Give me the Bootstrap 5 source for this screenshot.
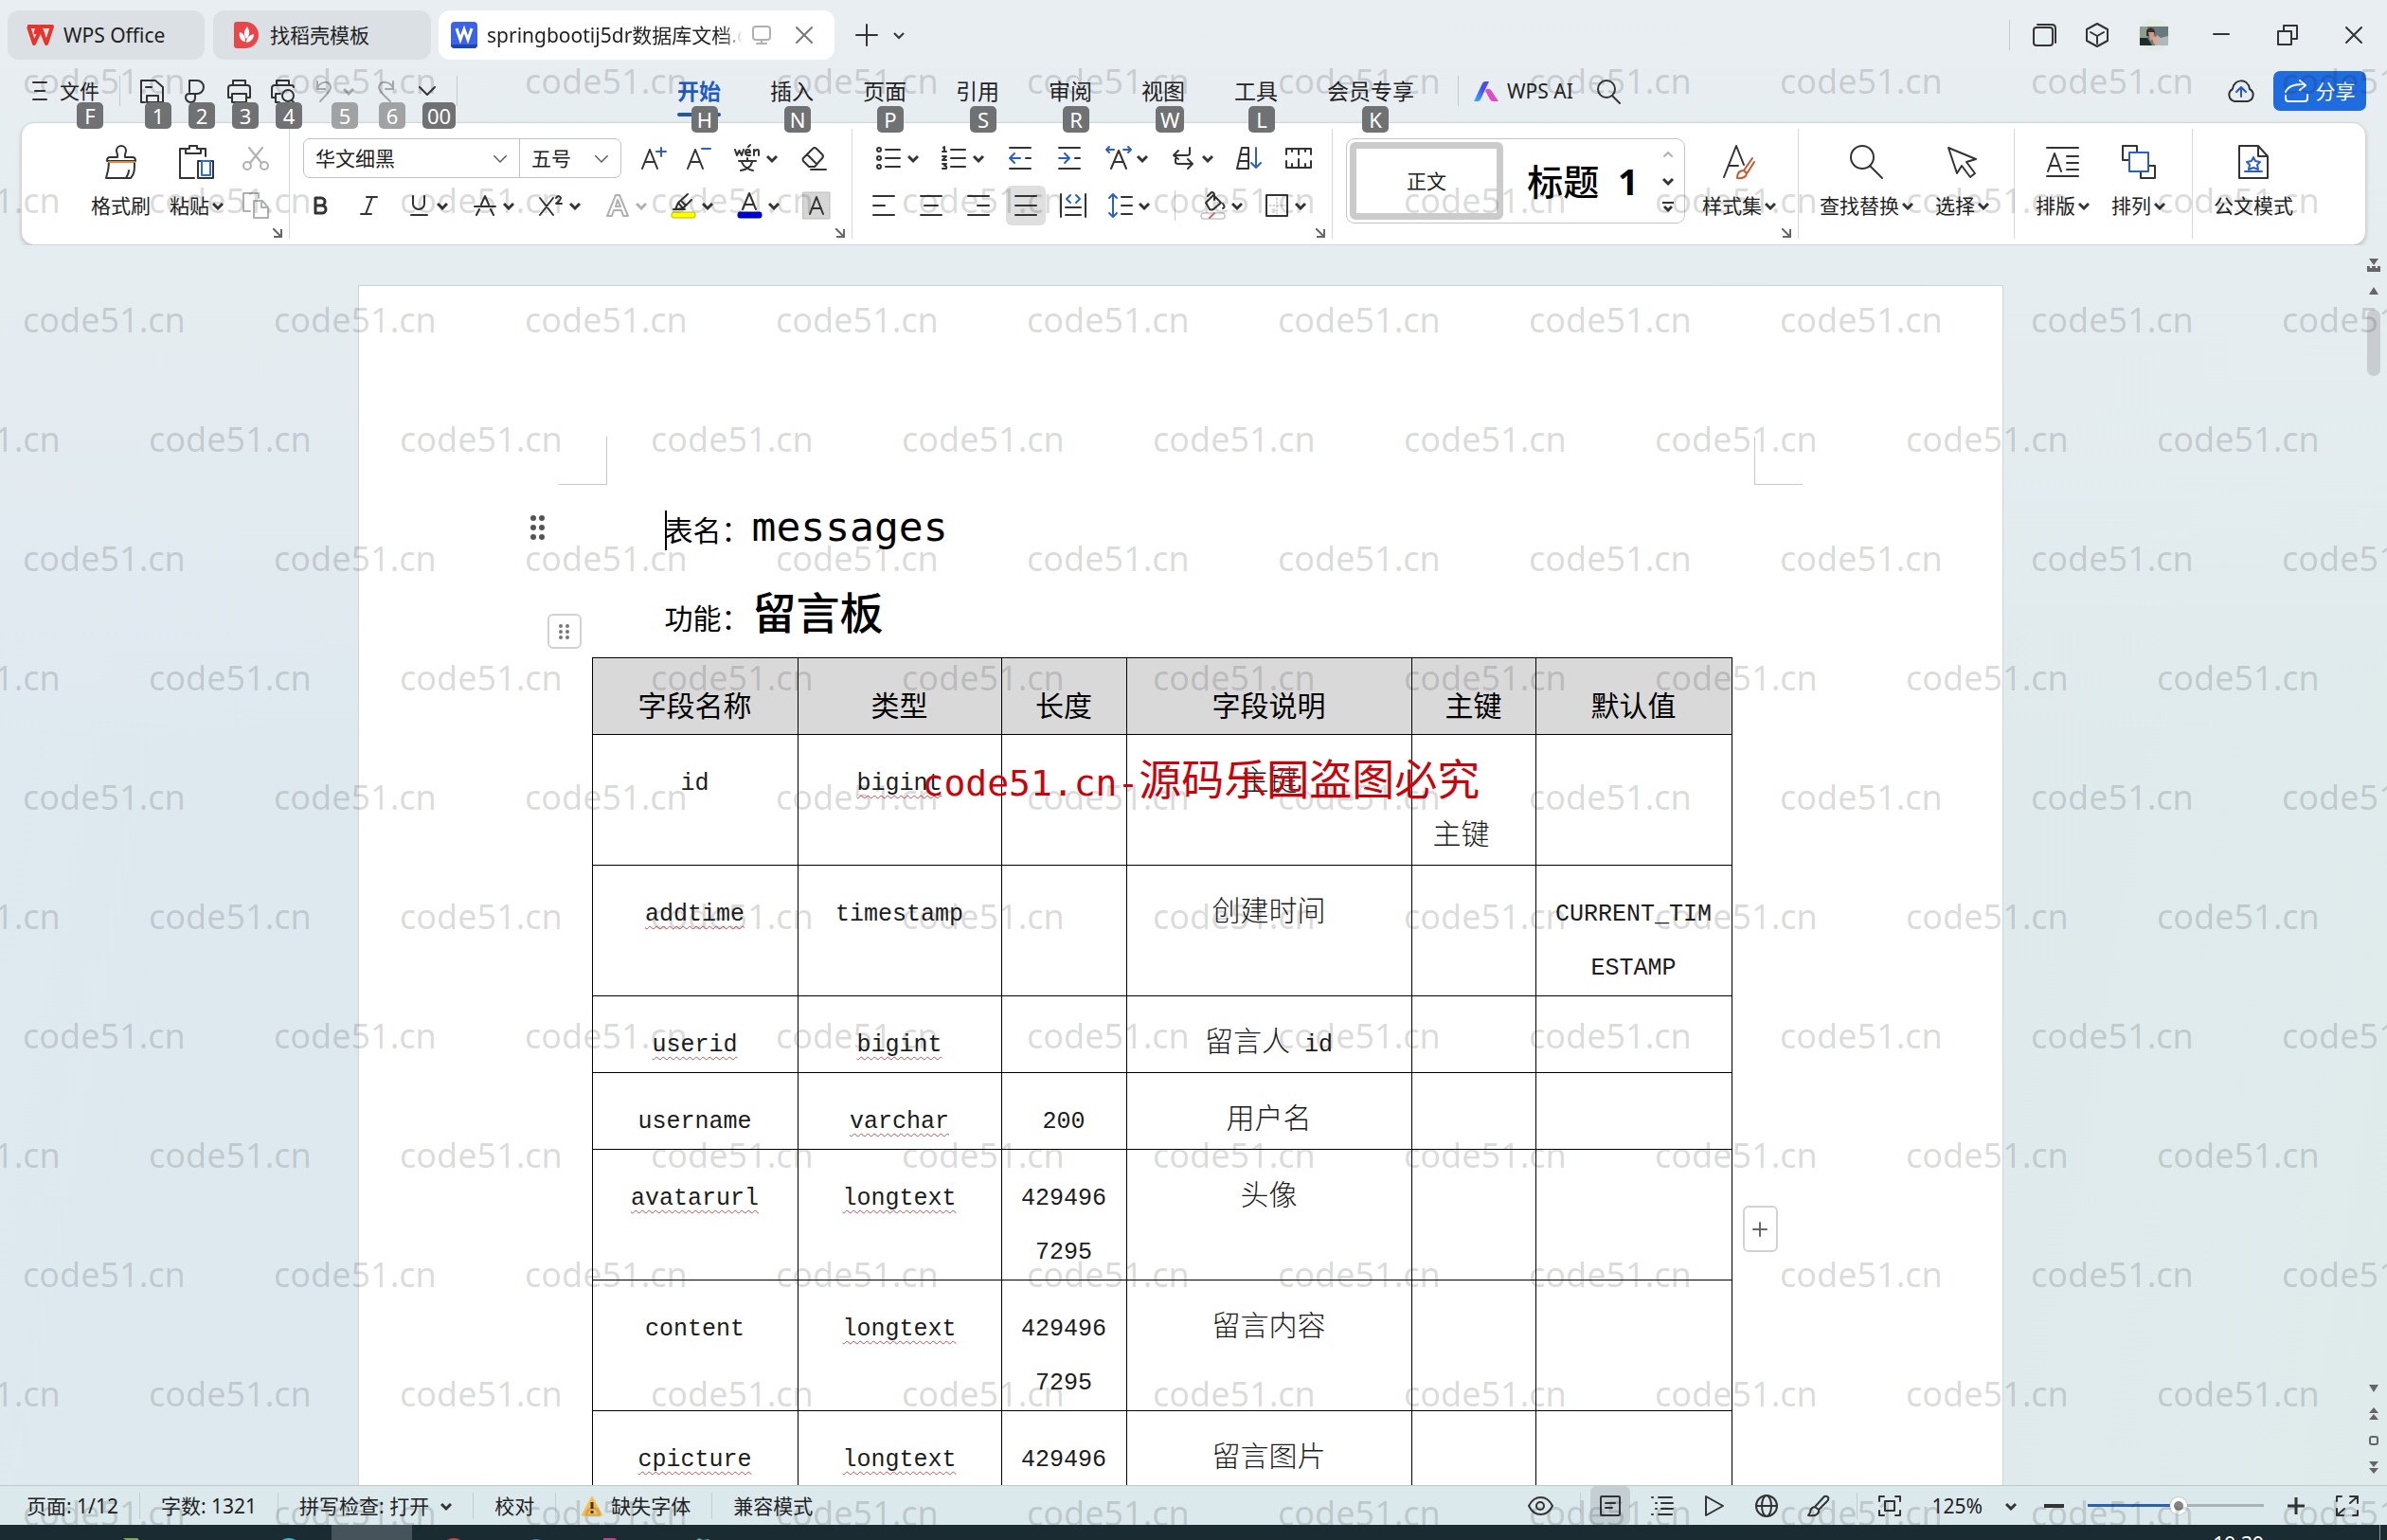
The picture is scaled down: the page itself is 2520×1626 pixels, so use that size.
<!DOCTYPE html>
<html lang="zh-CN">
<head>
<meta charset="utf-8">
<meta name="viewport" content="width=device-width, initial-scale=1">
<title>springbootij5dr数据库文档 - WPS Office</title>
<link rel="stylesheet" href="https://cdn.jsdelivr.net/npm/bootstrap@5.3.0/dist/css/bootstrap.min.css">
<style>
body{font-family:"Noto Sans","Noto Sans CJK SC",sans-serif;font-size:21px;line-height:30px;color:#222;background:linear-gradient(100deg,#dfe9f0 0,#dce9ed 45%,#e0eaee 75%,#dfebeb 100%)}
button{font:inherit;color:inherit;background:none;border:0;padding:0}
svg{display:block;flex:none;overflow:visible}
.ic{fill:none;stroke:#333;stroke-width:2;stroke-linecap:round;stroke-linejoin:round}
.chev{width:12px;height:12px;fill:none;stroke:#333;stroke-width:3}
.thin-chev{stroke-width:2}
.faded{opacity:.38}
.shell-head{background:linear-gradient(#e8eef2,#e6edf1)}
.titlebar{padding:11px 0 0 8px;height:63px}
.doc-tab{height:52px;border-radius:12px;background:#dbe0e4;white-space:nowrap}
.doc-tab.current{background:#fff}
.tab-home{width:208px;padding-left:20px;gap:10px;margin-right:9px}
.tab-tpl{width:230px;padding-left:22px;gap:12px;margin-right:8px}
.tab-doc{width:418px;padding-left:13px;gap:10px;margin-right:22px}
.tab-title{width:270px;overflow:hidden;-webkit-mask-image:linear-gradient(90deg,#000 92%,transparent);mask-image:linear-gradient(90deg,#000 92%,transparent)}
.vrule{width:1px;height:32px;background:#c6cbd0;flex:none}
.win-btn{width:70px;height:50px}
.app-btn{width:56px;height:50px}
.menubar{height:66px;padding-left:35px}
.hit{position:relative;height:42px}
.keytip{position:absolute;top:33px;left:5px;min-width:28px;height:28px;line-height:28px;padding:0 5px;border-radius:5px;background:#707172;color:#fff;font-size:22px;text-align:center;z-index:3}
.keytip.dim{background:#a0a2a4}
.keytip.at-end{left:auto;right:-4px}
.quick{gap:21px}
.file-btn{gap:14px}
.menu-tab{font-size:23px;position:relative;height:42px;color:#222;text-decoration:none;line-height:42px;white-space:nowrap}
.menu-tab .keytip{top:37px;left:15px}
.menu-tab .keytip.mid{left:37px}
.menu-tab.on{color:#1f5cc0;font-weight:700}
.menu-tab.on::after{content:"";position:absolute;left:0;right:0;top:44px;height:4px;border-radius:2px;background:#2457a6}
.menu-tab.on .keytip{font-weight:400}
.menus{gap:52px;margin-left:232px;margin-right:46px}
.share{background:#1f6be0;color:#fff;width:98px;height:42px;border-radius:7px;margin-right:22px}
.ribbon{margin:0 22px;height:130px;background:#fff;border-radius:14px;border:1px solid #d2d6d9;box-shadow:0 2px 4px rgba(0,0,0,.18)}
.rgroup{position:relative;padding:16px 23px 0;gap:23px}
.rgroup+.rgroup::before{content:"";position:absolute;left:0;top:6px;bottom:6px;width:1px;background:#d5d7d9}
.g-clip{padding:16px 21px 0 73px;gap:20px}
.g-font{padding-left:15px}
.g-para{padding:16px 21px 0 20px}
.g-style{padding-left:15px;gap:18px}
.g-find{padding-right:26px}
.g-layout{padding-right:28px}
.big{height:92px;white-space:nowrap}
.big .pic{height:50px}
.big .cap{height:42px;gap:3px}
.launch{position:absolute;right:7px;bottom:7px;width:10px;height:10px;fill:none;stroke:#666;stroke-width:2}
.rrow{height:42px}
.g20{gap:20px}.g22{gap:22px}.g24{gap:24px}.g25{gap:25px}
.in6{padding-left:6px}
.split{gap:5px}
.cell{width:28px;height:42px}
.cell.slim{width:24px}
.cell.on{background:#dfdfdf;border-radius:6px;width:42px;margin:0 -7px}
.fontbox{border:1px solid #bfc3c6;border-radius:7px;height:42px;width:336px}
.pick{position:relative}
.pick.size{width:107px}
.pick select{appearance:none;border:0;background:transparent;height:40px;width:100%;padding:0 12px;font:inherit;color:#222}
.pick .chev{position:absolute;right:12px;top:12px;width:16px;height:16px;stroke:#555;stroke-width:1;pointer-events:none}
.pick+.pick{border-left:1px solid #bfc3c6}
.stylebox{width:358px;height:90px;border:1px solid #c3c6c9;border-radius:9px;padding:3px}
.style-now{width:162px;height:82px;border:7px solid #cbcbcb;border-radius:6px}
.style-h1{font-size:38px;font-weight:500;color:#000;white-space:nowrap}
.workspace{min-height:0;overflow:hidden;background:linear-gradient(#e6edf1,rgba(230,237,241,0) 40%)}
.paper{position:relative;width:1737px;margin-top:42px;background:#fff;border:1px solid #cfd6d9;border-bottom:0;padding:210px 0 0 246px;height:1600px;color:#000}
.crop{position:absolute;width:51px;height:51px;top:159px;border:0 solid #c8c8c8;border-bottom-width:1px}
.crop-l{left:211px;border-right-width:1px}
.crop-r{right:211px;border-left-width:1px}
.doc-line{padding-left:77px;font-size:30px;height:88px;line-height:88px;font-family:"Noto Sans CJK SC",sans-serif;white-space:nowrap;margin:0}
.mono-name{font-family:"DejaVu Sans Mono",monospace;font-size:43px;margin-left:2px}
.cn-name{font-size:46px;font-weight:500;margin-left:3px}
.caret{display:inline-block;width:2px;height:42px;background:#000;margin-right:-2px;vertical-align:-10px}
.dragdots{position:absolute;left:181px;top:242px}
.handle{position:absolute;left:199px;top:346px;width:36px;height:37px;border:2px solid #d2d2d2;border-radius:6px;background:#fff}
.addcol{position:absolute;left:1461px;top:971px;width:37px;height:49px;border:2px solid #d2d2d2;border-radius:6px;background:#fff}
.schema{width:1203px;border-collapse:collapse;table-layout:fixed;margin:6px 0 0;font-family:"Liberation Mono","Noto Sans CJK SC",monospace;font-size:25px;line-height:57px;text-align:center;color:#1c1c1c}
.schema th,.schema td{border:1px solid #000;padding:23px 0 0;vertical-align:top;font-weight:400}
.schema th{background:#d9d9d9;color:#000;font-size:30px;line-height:51px;padding-bottom:6px;font-family:"Noto Sans CJK SC",sans-serif}
.schema i{font-style:normal;font-size:30px;font-family:"Noto Sans CJK SC",sans-serif;font-weight:300;line-height:1}
.schema u{text-decoration:underline wavy #c4504e 1px;text-underline-offset:5px}
.schema .pk{text-align:left;padding-left:22px}
.c1{width:217px}.c2{width:215px}.c3{width:132px}.c4{width:301px}.c5{width:131px}.c6{width:207px}
.stamp{position:absolute;left:595px;top:489px;font-size:45px;line-height:60px;color:#c9040c;font-family:"Noto Sans CJK SC",sans-serif;white-space:nowrap}
.stamp span{font-family:"DejaVu Sans Mono",monospace;font-size:38px}
.rail{width:28px;padding:14px 0 12px}
.rail svg{fill:#666}
.thumb{width:14px;height:70px;border-radius:7px;background:#c9cdd0}
.statusbar{height:42px;border-top:1px solid #bcc8cc;background:#dbe8ec;padding-left:28px;white-space:nowrap}
.statusbar .vrule{background:#c3ced2;height:28px}
.view-tools{gap:25px;margin-right:30px}
.view-on{background:#c3cfd2;border-radius:6px;width:42px;height:41px;margin:0 -6px}
.vbtn{width:30px;height:41px}
.zoomer{appearance:none;width:186px;height:24px;margin:0;background:linear-gradient(#2b62ad,#2b62ad) 0 50%/52% 3px no-repeat,linear-gradient(#aab3b6,#aab3b6) 0 50%/100% 3px no-repeat}
.zoomer::-webkit-slider-thumb{appearance:none;width:18px;height:18px;border-radius:50%;background:#858585;border:4px solid #fff;box-shadow:0 0 2px #999}
.taskbar{height:16px;background:#1b2b32;overflow:hidden;color:#fff}
.task-on{background:#46535a;width:85px;height:16px}
.clock{padding:5px 122px 0 0}
.desk-edge{width:1px;background:#8b979c;margin-right:7px}
.wm{position:absolute;inset:0 0 16px 0;overflow:hidden;pointer-events:none;z-index:9;padding-top:23px;color:rgba(30,30,30,.17);font:36px/126px "Noto Sans",sans-serif}
.wm div{height:126px;white-space:nowrap;padding-left:24px}
.wm div:nth-child(even){padding-left:0;margin-left:-108px}
.wm span{display:inline-block;width:265px}
</style>
<script src="https://cdn.jsdelivr.net/npm/bootstrap@5.3.0/dist/js/bootstrap.bundle.min.js"></script>
</head>
<body class="d-flex flex-column vh-100 overflow-hidden position-relative">
<svg width="0" height="0" class="position-absolute">
<symbol id="cv" viewBox="0 0 12 12"><path d="M1 4l5 5 5-5"/></symbol>
<symbol id="ln" viewBox="0 0 10 10"><path d="M0 0l9 9M9 1v8H1"/></symbol>
</svg>

<header class="shell-head">
<div class="titlebar d-flex">
  <button class="doc-tab tab-home d-flex align-items-center"><svg width="29" height="22" viewBox="0 0 29 22" fill="none" stroke="#e5352d" stroke-width="4"><path d="M1 2h11l-3 8M2 2l6 18L15 5l6 15 6-18H14l4 9" stroke-linejoin="round"/></svg>WPS Office</button>
  <button class="doc-tab tab-tpl d-flex align-items-center"><svg width="26" height="28" viewBox="0 0 26 28"><path d="M3 0h9a14 14 0 010 28H3a3 3 0 01-3-3V3a3 3 0 013-3z" fill="#e8474a"/><path d="M14 5c3 5 3 9-1 13-3-4-3-8 1-13zM6 11c4 1 6 4 6 10-5-1-7-5-6-10zM21 13c0 5-3 8-8 9 0-5 3-8 8-9z" fill="#fff"/></svg>找稻壳模板</button>
  <div class="doc-tab current tab-doc d-flex align-items-center"><svg width="28" height="28" viewBox="0 0 28 28"><rect width="28" height="28" rx="4" fill="#3a63e8"/><path d="M0 24h28v0a4 4 0 01-4 4H4a4 4 0 01-4-4z" fill="#1f44b8"/><path d="M6 7l4 12 4-11 4 11 4-12" fill="none" stroke="#fff" stroke-width="3"/></svg><span class="tab-title">springbootij5dr数据库文档.doc</span>
    <svg class="ic faded" width="20" height="20" viewBox="0 0 20 20"><rect x="1" y="1" width="18" height="14" rx="3"/><path d="M10 15v4M5 19h10"/></svg>
    <button class="ms-3" aria-label="关闭标签"><svg class="ic" width="18" height="18" viewBox="0 0 18 18"><path d="M1 1l16 16M17 1L1 17" stroke="#777"/></svg></button></div>
  <button aria-label="新建"><svg class="ic" width="24" height="24" viewBox="0 0 24 24"><path d="M12 1v22M1 12h22"/></svg></button>
  <button class="ms-3" aria-label="更多"><svg class="chev thin-chev"><use href="#cv"/></svg></button>
  <div class="d-flex align-items-center ms-auto">
    <span class="vrule me-2"></span>
    <button class="app-btn d-flex align-items-center justify-content-center" aria-label="窗口"><svg class="ic" width="25" height="24" viewBox="0 0 25 24"><rect x="1" y="4" width="20" height="19" rx="3"/><path d="M5 1h15q4 0 4 4v15"/></svg></button>
    <button class="app-btn d-flex align-items-center justify-content-center" aria-label="应用"><svg class="ic" width="24" height="26" viewBox="0 0 24 26"><path d="M12 1l11 6v12l-11 6-11-6V7zM5 10l7 4 7-4M12 14v8"/></svg></button>
    <button class="app-btn d-flex align-items-center justify-content-center ms-1" aria-label="账号"><svg width="34" height="34" viewBox="0 0 34 34"><circle cx="17" cy="17" r="17" fill="#e4ebe3"/><rect x="2" y="8" width="30" height="20" fill="#68787b"/><path d="M2 8h8v12H2z" fill="#8d9e95"/><path d="M9 12q5-6 9 1v5h-9z" fill="#3b2c2b"/><path d="M11 14h6l1 6-5 3z" fill="#c99c86"/><path d="M2 28v-8l8 0 5 8z" fill="#1e2d2b"/><path d="M20 17l4 3 8-2v10H18z" fill="#aeb8be"/><path d="M15 20l6-2 1 7-5 2z" fill="#d6a793"/></svg></button>
    <button class="win-btn d-flex align-items-center justify-content-center ms-2" aria-label="最小化"><svg class="ic" width="18" height="18" viewBox="0 0 18 18"><path d="M1 8h16"/></svg></button>
    <button class="win-btn d-flex align-items-center justify-content-center" aria-label="还原"><svg class="ic" width="22" height="22" viewBox="0 0 22 22"><rect x="1" y="7" width="14" height="14"/><path d="M7 7V1h14v14h-6"/></svg></button>
    <button class="win-btn d-flex align-items-center justify-content-center" aria-label="关闭"><svg class="ic" width="18" height="18" viewBox="0 0 18 18"><path d="M1 1l16 16M17 1L1 17"/></svg></button>
  </div>
</div>

<div class="menubar d-flex align-items-center">
  <div class="quick d-flex align-items-center">
    <button class="hit file-btn d-flex align-items-center text-nowrap"><svg class="ic" width="14" height="20" viewBox="0 0 14 20"><path d="M0 1h14M2 10h10M0 19h14"/></svg>文件<span class="keytip at-end">F</span></button>
    <span class="vrule"></span>
    <button class="hit d-flex align-items-center" aria-label="保存"><svg class="ic" width="25" height="25" viewBox="0 0 25 25"><path d="M5 24H1V1h15l8 7v16h-4M7 24v-7h12v7zM6 8h6"/></svg><span class="keytip">1</span></button>
    <button class="hit d-flex align-items-center" aria-label="输出为PDF"><svg class="ic" width="25" height="25" viewBox="0 0 25 25"><path d="M6 13V1h8a7 7 0 010 14H6c-3 0-4 2-4 4s2 5 5 5 5-2 5-5v-4"/></svg><span class="keytip">2</span></button>
    <button class="hit d-flex align-items-center" aria-label="打印"><svg class="ic" width="25" height="25" viewBox="0 0 25 25"><path d="M6 6V1h13v5M5 19H1V9q0-3 3-3h17q3 0 3 3v10h-4M5 15h15v9H5z"/></svg><span class="keytip">3</span></button>
    <button class="hit d-flex align-items-center" aria-label="打印预览"><svg class="ic" width="25" height="25" viewBox="0 0 25 25"><path d="M6 6V1h13v5M5 19H1V9q0-3 3-3h17q3 0 3 2M10 15H5v9h4"/><circle cx="18" cy="17" r="6"/><path d="M22 22l4 4"/></svg><span class="keytip">4</span></button>
    <button class="hit d-flex align-items-center" aria-label="撤销"><svg class="ic faded me-2" width="22" height="24" viewBox="0 0 22 24"><path d="M3 2v8h8M3 9C6 2 16 0 17 8c0 5-6 9-11 15"/></svg><svg class="chev faded"><use href="#cv"/></svg><span class="keytip dim at-end">5</span></button>
    <button class="hit d-flex align-items-center" aria-label="恢复"><svg class="ic faded" width="25" height="24" viewBox="0 0 25 24"><path d="M20 2v8h-8M20 9C17 2 7 0 5 8c0 5 7 10 12 15"/></svg><span class="keytip dim">6</span></button>
    <button class="hit d-flex align-items-center" aria-label="更多命令"><svg class="ic" width="20" height="12" viewBox="0 0 20 12"><path d="M2 2l8 8 8-8"/></svg><span class="keytip">00</span></button>
    <span class="vrule"></span>
  </div>
  <nav class="menus d-flex align-items-center">
    <a class="menu-tab on" href="#">开始<span class="keytip">H</span></a>
    <a class="menu-tab" href="#">插入<span class="keytip">N</span></a>
    <a class="menu-tab" href="#">页面<span class="keytip">P</span></a>
    <a class="menu-tab" href="#">引用<span class="keytip">S</span></a>
    <a class="menu-tab" href="#">审阅<span class="keytip">R</span></a>
    <a class="menu-tab" href="#">视图<span class="keytip">W</span></a>
    <a class="menu-tab" href="#">工具<span class="keytip">L</span></a>
    <a class="menu-tab" href="#">会员专享<span class="keytip mid">K</span></a>
  </nav>
  <span class="vrule me-3"></span>
  <button class="d-flex align-items-center text-nowrap"><svg class="me-2" width="27" height="21" viewBox="0 0 27 21"><defs><linearGradient id="ai" x1="0" y1="1" x2="1" y2="0"><stop offset="0" stop-color="#35b7ff"/><stop offset=".6" stop-color="#4b4bf0"/></linearGradient></defs><path d="M0 21L9 2q1-2 3-2h4L7 19q-1 2-3 2z" fill="url(#ai)"/><path d="M13 8q3-1 5 1l8 12h-6q-2 0-3-2l-5-9z" fill="#e04cc8"/></svg>WPS AI</button>
  <button class="ms-4" aria-label="搜索"><svg class="ic" width="27" height="27" viewBox="0 0 27 27"><circle cx="11" cy="11" r="9"/><path d="M17 18l8 8"/></svg></button>
  <button class="ms-auto me-3 pe-1" aria-label="云同步"><svg class="ic" width="29" height="25" viewBox="0 0 29 25"><path d="M8 23a7 7 0 01-2-13c1-11 16-12 18 0a7 7 0 01-2 13z"/><path d="M15 18V9M10 13l5-5 5 5" stroke="#2a56c6"/></svg></button>
  <button class="share d-flex align-items-center justify-content-center gap-2"><svg class="ic" width="25" height="24" viewBox="0 0 25 24"><path d="M1 13c2-5 8-8 18-8M16 1l6 5-6 5M1 17v3q0 3 3 3h17q3 0 3-3v-4" stroke="#fff"/></svg>分享</button>
</div>

<div class="ribbon d-flex">
  <div class="rgroup g-clip d-flex">
    <button class="big d-flex flex-column align-items-center"><span class="pic d-flex align-items-center"><svg class="ic" width="34" height="36" viewBox="0 0 34 36"><path d="M13 13c1-3-1-4-1-7a5 5 0 0110 0c0 3-2 4-1 7h8q3 0 3 4H2q0-4 3-4zM4 18c0 8-1 11-3 17h26c4-4 4-9 4-17M22 35c2-3 3-5 3-8"/><path d="M4 18h27" stroke="#d98a3a"/></svg></span><span class="cap d-flex align-items-center">格式刷</span></button>
    <button class="big d-flex flex-column align-items-center"><span class="pic d-flex align-items-center"><svg class="ic" width="37" height="36" viewBox="0 0 37 36"><path d="M6 4H1v31h15M23 4h5v8M7 4h4V1h8v3h4v5H7z"/><path d="M20 17v18h16V17z"/><path d="M24 17h9v15h-9z" stroke="#2c6fd0"/></svg></span><span class="cap d-flex align-items-center">粘贴<svg class="chev"><use href="#cv"/></svg></span></button>
    <div class="d-flex flex-column gap-2">
      <button class="cell rrow d-flex align-items-center justify-content-center" aria-label="剪切"><svg class="ic faded" width="28" height="25" viewBox="0 0 28 25"><circle cx="5" cy="20" r="4"/><circle cx="23" cy="20" r="4"/><path d="M7 1l13 16M21 1L8 17"/></svg></button>
      <button class="cell rrow d-flex align-items-center justify-content-center" aria-label="复制"><svg class="ic faded" width="28" height="28" viewBox="0 0 28 28"><path d="M8 20H1V1h16v5M12 9h9l6 7v11H12zM20 9v7h7"/></svg></button>
    </div>
    <svg class="launch"><use href="#ln"/></svg>
  </div>

  <div class="rgroup g-font d-flex flex-column gap-2">
    <div class="rrow g20 d-flex align-items-center">
      <div class="fontbox d-flex">
        <label class="pick flex-grow-1"><select aria-label="字体"><option>华文细黑</option></select><svg class="chev"><use href="#cv"/></svg></label>
        <label class="pick size"><select aria-label="字号"><option>五号</option></select><svg class="chev"><use href="#cv"/></svg></label>
      </div>
      <button class="cell d-flex align-items-center justify-content-center" aria-label="增大字号"><svg class="ic" width="26" height="24" viewBox="0 0 26 24"><path d="M1 23L9 3l8 20M4 16h10"/><path d="M21 1v9M16 5h10" stroke="#2c5fc4"/></svg></button>
      <button class="cell d-flex align-items-center justify-content-center" aria-label="减小字号"><svg class="ic" width="26" height="24" viewBox="0 0 26 24"><path d="M1 23L9 3l8 20M4 16h10"/><path d="M16 2h9" stroke="#2c5fc4"/></svg></button>
      <button class="split d-flex align-items-center px-1" aria-label="拼音指南"><svg class="ic" width="28" height="28" viewBox="0 0 28 28"><path d="M0 5l2 6 2.500-5L7 11l2-6M11 8h5q0-3-2.500-3T11 8t3 3h2M14 2l2-2M20 11V5M20 7q5-4 5 0v4M4 17h18M13 14v3M7 18c2 5 7 8 12 9M18 18c-1 5-6 8-12 9"/></svg><svg class="chev"><use href="#cv"/></svg></button>
      <button class="cell d-flex align-items-center justify-content-center" aria-label="清除格式"><svg class="ic" width="27" height="26" viewBox="0 0 27 26"><path d="M12 3q2-2 4 0l6 6q2 2 0 4l-8 9H8l-6-6q-1-2 0-3zM6 9l10 10M10 25h16"/></svg></button>
    </div>
    <div class="rrow g25 in6 d-flex align-items-center">
      <button class="cell slim d-flex align-items-center justify-content-center" aria-label="加粗"><svg class="ic" width="15" height="20" viewBox="0 0 15 20"><path d="M2 2h6a4 4 0 010 8H2zM2 10h7a4 4 0 010 8H2z" stroke-width="3"/></svg></button>
      <button class="cell d-flex align-items-center justify-content-center" aria-label="倾斜"><svg class="ic" width="19" height="20" viewBox="0 0 19 20"><path d="M7 1h11M1 19h11M13 1L6 19"/></svg></button>
      <button class="split d-flex align-items-center" aria-label="下划线"><svg class="ic" width="28" height="20" viewBox="0 0 28 20"><path d="M8 0v8a6 6 0 0012 0V0M6 20h17"/></svg><svg class="chev"><use href="#cv"/></svg></button>
      <button class="split d-flex align-items-center" aria-label="删除线"><svg class="ic" width="28" height="22" viewBox="0 0 28 22"><path d="M10 10l4-9 4 9M8 15l-3 6M20 15l3 6M3 12h22"/></svg><svg class="chev"><use href="#cv"/></svg></button>
      <button class="split d-flex align-items-center" aria-label="上标"><svg class="ic" width="28" height="22" viewBox="0 0 28 22"><path d="M2 3l14 18M16 3L2 21M19 3q3-4 5 0 0 2-5 6h6"/></svg><svg class="chev"><use href="#cv"/></svg></button>
      <button class="split d-flex align-items-center faded" aria-label="文字效果"><svg class="ic" width="28" height="24" viewBox="0 0 28 24"><path d="M3 23L12 1h4l9 22h-5l-2-6h-8l-2 6zM12 13h5l-3-7z"/></svg><svg class="chev"><use href="#cv"/></svg></button>
      <button class="split d-flex align-items-center" aria-label="突出显示"><svg class="ic" width="28" height="28" viewBox="0 0 28 28"><path d="M5 18l3-7 5 6zM8 11l10-9M13 17l9-9M12 10l4 4M3 18h12"/><rect x="1" y="21" width="25" height="6" rx="2" fill="#ffff00" stroke="#b9b900" stroke-width="1"/></svg><svg class="chev"><use href="#cv"/></svg></button>
      <button class="split d-flex align-items-center" aria-label="字体颜色"><svg class="ic" width="28" height="28" viewBox="0 0 28 28"><path d="M6 18L13 1l7 17M8 13h10"/><rect x="1" y="21" width="25" height="6" rx="2" fill="#0000d0" stroke="#0000a0" stroke-width="1"/></svg><svg class="chev"><use href="#cv"/></svg></button>
      <button class="cell d-flex align-items-center justify-content-center" aria-label="字符底纹"><svg class="ic" width="28" height="28" viewBox="0 0 28 28"><rect x="0" y="0" width="28" height="28" fill="#d6d6d6" stroke="#bdbdbd" stroke-width="1"/><path d="M7 23L14 5l7 18M9 17h10"/></svg></button>
    </div>
    <svg class="launch"><use href="#ln"/></svg>
  </div>

  <div class="rgroup g-para d-flex flex-column gap-2">
    <div class="rrow g24 in6 d-flex align-items-center">
      <button class="split d-flex align-items-center" aria-label="项目符号"><svg class="ic" width="28" height="24" viewBox="0 0 28 24"><circle cx="3" cy="3" r="2"/><circle cx="3" cy="12" r="2"/><circle cx="3" cy="21" r="2"/><path d="M10 3h15M10 12h15M10 21h15"/></svg><svg class="chev"><use href="#cv"/></svg></button>
      <button class="split d-flex align-items-center" aria-label="编号"><svg class="ic" width="28" height="24" viewBox="0 0 28 24"><path d="M2 1l1-1v5M1 5h4M1 10h4L1 14h4M1 18h4l-2 2q3 0 2 3H1M10 3h15M10 12h15M10 21h15"/></svg><svg class="chev"><use href="#cv"/></svg></button>
      <button class="cell d-flex align-items-center justify-content-center" aria-label="减少缩进"><svg class="ic" width="24" height="24" viewBox="0 0 24 24"><path d="M1 1h22M18 12h5M1 23h22"/><path d="M12 12H1M6 7l-5 5 5 5" stroke="#2c5fc4"/></svg></button>
      <button class="cell d-flex align-items-center justify-content-center" aria-label="增加缩进"><svg class="ic" width="24" height="24" viewBox="0 0 24 24"><path d="M1 1h22M18 12h5M1 23h22"/><path d="M1 12h11M7 7l5 5-5 5" stroke="#2c5fc4"/></svg></button>
      <button class="split d-flex align-items-center" aria-label="中文版式"><svg class="ic" width="28" height="24" viewBox="0 0 28 24"><path d="M6 23l8-19 8 19M9 16h10"/><path d="M9 3H1M4 0L1 3l3 3M19 3h8M24 0l3 3-3 3" stroke="#2c5fc4"/></svg><svg class="chev"><use href="#cv"/></svg></button>
      <button class="split d-flex align-items-center" aria-label="换行"><svg class="ic" width="28" height="24" viewBox="0 0 28 24"><path d="M20 1v6q0 2-3 2H4M8 4L3 9l5 4M5 13v3q0 2 3 2h14M18 13l5 5-5 5"/></svg><svg class="chev"><use href="#cv"/></svg></button>
      <button class="cell d-flex align-items-center justify-content-center" aria-label="排序"><svg class="ic" width="28" height="24" viewBox="0 0 28 24"><path d="M1 23L6 1h7v22zM5 8h8M3 15h10"/><path d="M21 1v21M16 17l5 5 5-5" stroke="#2c5fc4"/></svg></button>
      <button class="cell d-flex align-items-center justify-content-center" aria-label="制表位"><svg class="ic" width="28" height="24" viewBox="0 0 28 24"><path d="M1 8V2h26v6M7 2v3M14 2v6M21 2v3M1 15v7h26v-7M7 22v-4M14 22v-9M21 22v-4"/></svg></button>
    </div>
    <div class="rrow g22 d-flex align-items-center">
      <button class="cell d-flex align-items-center justify-content-center" aria-label="左对齐"><svg class="ic" width="24" height="22" viewBox="0 0 24 22"><path d="M1 1h22M1 11h12M1 21h22"/></svg></button>
      <button class="cell d-flex align-items-center justify-content-center" aria-label="居中"><svg class="ic" width="24" height="22" viewBox="0 0 24 22"><path d="M1 1h22M5 11h14M1 21h22"/></svg></button>
      <button class="cell d-flex align-items-center justify-content-center" aria-label="右对齐"><svg class="ic" width="24" height="22" viewBox="0 0 24 22"><path d="M1 1h22M11 11h12M1 21h22"/></svg></button>
      <button class="cell on d-flex align-items-center justify-content-center" aria-label="两端对齐"><svg class="ic" width="24" height="22" viewBox="0 0 24 22"><path d="M1 1h22M1 11h22M1 21h22"/></svg></button>
      <button class="cell d-flex align-items-center justify-content-center" aria-label="分散对齐"><svg class="ic" width="28" height="24" viewBox="0 0 28 24"><path d="M1 0v24M27 0v24M6 14h16M6 22h16"/><path d="M11 1L7 5l4 4M17 1l4 4-4 4" stroke="#2c5fc4"/></svg></button>
      <button class="split d-flex align-items-center" aria-label="行距"><svg class="ic" width="28" height="24" viewBox="0 0 28 24"><path d="M15 3h11M15 12h11M15 21h11"/><path d="M6 0v24M2 4l4-4 4 4M2 20l4 4 4-4" stroke="#2c5fc4"/></svg><svg class="chev"><use href="#cv"/></svg></button>
      <span class="vrule mx-1"></span>
      <button class="split d-flex align-items-center" aria-label="底纹"><svg class="ic" width="28" height="28" viewBox="0 0 28 28"><path d="M8 4l4-4q3 0 3 3v5M6 11l8-8 8 8-8 7q-2 1-4 0zM24 12q3 4 0 5"/><rect x="1" y="22" width="25" height="6" rx="2" stroke="#aaa" stroke-width="1"/><path d="M10 27l5-5" stroke="#d66"/></svg><svg class="chev"><use href="#cv"/></svg></button>
      <button class="split d-flex align-items-center" aria-label="边框"><svg class="ic" width="28" height="24" viewBox="0 0 28 24"><rect x="3" y="1" width="22" height="22"/><path d="M14 4v17M6 12h17" stroke="#aaa" stroke-width="1" stroke-dasharray="2 2"/></svg><svg class="chev"><use href="#cv"/></svg></button>
    </div>
    <svg class="launch"><use href="#ln"/></svg>
  </div>

  <div class="rgroup g-style d-flex">
    <div class="stylebox d-flex align-items-center">
      <button class="style-now">正文</button>
      <button class="style-h1 flex-grow-1">标题&nbsp; <b>1</b></button>
      <div class="d-flex flex-column gap-3 me-2"><svg class="ic faded" width="12" height="12" viewBox="0 0 12 12"><path d="M2 8l4-4 4 4"/></svg><svg class="chev"><use href="#cv"/></svg><svg class="chev" viewBox="0 0 12 12"><path d="M0 1h12" stroke-width="2"/><path d="M2 5l4 4 4-4"/></svg></div>
    </div>
    <button class="big d-flex flex-column align-items-center"><span class="pic d-flex align-items-center"><svg class="ic" width="34" height="36" viewBox="0 0 34 36"><path d="M1 34L14 1l8 20M6 22h10"/><path d="M31 14l-9 13M33 18l-7 11M22 27q-7 0-7 8 9 1 10-5z" stroke="#c8562a"/></svg></span><span class="cap d-flex align-items-center">样式集<svg class="chev"><use href="#cv"/></svg></span></button>
    <svg class="launch"><use href="#ln"/></svg>
  </div>

  <div class="rgroup g-find d-flex">
    <button class="big d-flex flex-column align-items-center"><span class="pic d-flex align-items-center"><svg class="ic" width="35" height="36" viewBox="0 0 35 36"><circle cx="13" cy="13" r="12"/><path d="M21 22l13 13"/></svg></span><span class="cap d-flex align-items-center">查找替换<svg class="chev"><use href="#cv"/></svg></span></button>
    <button class="big d-flex flex-column align-items-center"><span class="pic d-flex align-items-center"><svg class="ic" width="32" height="33" viewBox="0 0 32 33"><path d="M1 1l9 27 5-8 9 12 5-4-9-12 10-3z"/></svg></span><span class="cap d-flex align-items-center">选择<svg class="chev"><use href="#cv"/></svg></span></button>
  </div>
  <div class="rgroup g-layout d-flex">
    <button class="big d-flex flex-column align-items-center"><span class="pic d-flex align-items-center"><svg class="ic" width="35" height="32" viewBox="0 0 35 32"><path d="M1 1h33M1 31h33M2 26L9 7l7 19M4 20h10M22 10h12M22 17h12M22 24h12"/></svg></span><span class="cap d-flex align-items-center">排版<svg class="chev"><use href="#cv"/></svg></span></button>
    <button class="big d-flex flex-column align-items-center"><span class="pic d-flex align-items-center"><svg class="ic" width="36" height="36" viewBox="0 0 36 36"><path d="M8 16H1V1h15v6M29 22h6v13H20v-6"/><rect x="8" y="8" width="20" height="20" stroke="#2c5fc4"/></svg></span><span class="cap d-flex align-items-center">排列<svg class="chev"><use href="#cv"/></svg></span></button>
  </div>
  <div class="rgroup d-flex">
    <button class="big d-flex flex-column align-items-center"><span class="pic d-flex align-items-center"><svg class="ic" width="32" height="36" viewBox="0 0 32 36"><path d="M1 1h20l10 11v23H1zM21 1v11h10"/><path d="M16 13l2 4 5 1-3 3 1 5-5-2-5 2 1-5-3-3 5-1zM7 28h18" stroke="#2c5fc4"/></svg></span><span class="cap d-flex align-items-center">公文模式</span></button>
  </div>
</div>
</header>

<main class="workspace d-flex flex-grow-1">
  <div class="flex-grow-1 d-flex justify-content-center">
    <article class="paper">
      <span class="crop crop-l"></span><span class="crop crop-r"></span>
      <svg class="dragdots" width="16" height="26" viewBox="0 0 16 26" fill="#555"><circle cx="3" cy="3" r="3"/><circle cx="12" cy="3" r="3"/><circle cx="3" cy="13" r="3"/><circle cx="12" cy="13" r="3"/><circle cx="3" cy="23" r="3"/><circle cx="12" cy="23" r="3"/></svg>
      <button class="handle d-flex align-items-center justify-content-center" aria-label="表格手柄"><svg width="11" height="16" viewBox="0 0 11 16" fill="#777"><circle cx="2" cy="2" r="2"/><circle cx="9" cy="2" r="2"/><circle cx="2" cy="8" r="2"/><circle cx="9" cy="8" r="2"/><circle cx="2" cy="14" r="2"/><circle cx="9" cy="14" r="2"/></svg></button>
      <p class="doc-line"><span class="caret"></span>表名：<span class="mono-name">messages</span></p>
      <p class="doc-line">功能：<span class="cn-name">留言板</span></p>
      <table class="schema">
        <colgroup><col class="c1"><col class="c2"><col class="c3"><col class="c4"><col class="c5"><col class="c6"></colgroup>
        <thead><tr><th>字段名称</th><th>类型</th><th>长度</th><th>字段说明</th><th>主键</th><th>默认值</th></tr></thead>
        <tbody>
        <tr><td>id</td><td><u>bigint</u></td><td></td><td><i>主键</i></td><td class="pk"><br><i>主键</i></td><td></td></tr>
        <tr><td><u>addtime</u></td><td>timestamp</td><td></td><td><i>创建时间</i></td><td></td><td>CURRENT_TIM<br>ESTAMP</td></tr>
        <tr><td><u>userid</u></td><td><u>bigint</u></td><td></td><td><i>留言人</i> id</td><td></td><td></td></tr>
        <tr><td>username</td><td><u>varchar</u></td><td>200</td><td><i>用户名</i></td><td></td><td></td></tr>
        <tr><td><u>avatarurl</u></td><td><u>longtext</u></td><td>429496<br>7295</td><td><i>头像</i></td><td></td><td></td></tr>
        <tr><td>content</td><td><u>longtext</u></td><td>429496<br>7295</td><td><i>留言内容</i></td><td></td><td></td></tr>
        <tr><td><u>cpicture</u></td><td><u>longtext</u></td><td>429496<br>7295</td><td><i>留言图片</i></td><td></td><td></td></tr>
        </tbody>
      </table>
      <button class="addcol d-flex align-items-center justify-content-center" aria-label="添加列"><svg class="ic" width="16" height="16" viewBox="0 0 16 16"><path d="M8 1v14M1 8h14" stroke="#666"/></svg></button>
      <div class="stamp"><span>code51.cn-</span>源码乐园盗图必究</div>
    </article>
  </div>
  <div class="rail d-flex flex-column align-items-center">
    <svg width="14" height="14" viewBox="0 0 14 14"><path d="M2 0h10L7 7zM0 8h3v2h2V8h4v2h2V8h3v6H0z"/></svg>
    <svg class="mt-3" width="10" height="8" viewBox="0 0 10 8"><path d="M0 8h10L5 0z"/></svg>
    <div class="thumb mt-3"></div>
    <svg class="mt-auto mb-3" width="10" height="8" viewBox="0 0 10 8"><path d="M0 0h10L5 8z"/></svg>
    <svg class="mb-3" width="12" height="13" viewBox="0 0 12 13"><path d="M1 6h10L6 0zM1 13h10L6 7z"/></svg>
    <svg class="mb-3" width="12" height="12" viewBox="0 0 12 12"><rect x="2" y="2" width="8" height="8" rx="2" fill="none" stroke="#666" stroke-width="2"/></svg>
    <svg width="12" height="13" viewBox="0 0 12 13"><path d="M1 0h10L6 6zM1 7h10L6 13z"/></svg>
  </div>
</main>

<footer>
<div class="statusbar d-flex align-items-center">
  <div class="g22 d-flex align-items-center">
    <span>页面: 1/12</span><span class="vrule"></span>
    <span>字数: 1321</span><span class="vrule"></span>
    <button class="d-flex align-items-center gap-2">拼写检查: 打开<svg class="chev ms-1"><use href="#cv"/></svg></button><span class="vrule"></span>
    <span>校对</span><span class="vrule"></span>
    <span class="d-flex align-items-center gap-2 ps-1"><svg width="24" height="22" viewBox="0 0 24 22"><path d="M12 1l11 20H1z" fill="#f6bd55" stroke="#f6bd55" stroke-linejoin="round"/><path d="M12 7v7M12 16v3" stroke="#4a3413" stroke-width="3"/></svg>缺失字体</span><span class="vrule"></span>
    <span>兼容模式</span>
  </div>
  <div class="view-tools d-flex align-items-center ms-auto">
    <button class="vbtn d-flex align-items-center" aria-label="护眼模式"><svg class="ic" width="27" height="20" viewBox="0 0 27 20"><path d="M1 10C7-2 20-2 26 10 20 22 7 22 1 10z"/><circle cx="13" cy="10" r="4"/></svg></button>
    <span class="d-flex align-items-center"><span class="vrule me-3"></span>
    <button class="view-on d-flex align-items-center justify-content-center" aria-label="页面视图"><svg class="ic" width="22" height="22" viewBox="0 0 22 22"><rect x="1" y="1" width="20" height="20" rx="1"/><path d="M6 8h10M6 13h7"/></svg></button></span>
    <button class="vbtn d-flex align-items-center justify-content-center" aria-label="大纲视图"><svg class="ic" width="24" height="20" viewBox="0 0 24 20"><path d="M1 1h1M8 1h14M5 7h1M11 7h12M5 13h1M11 13h12M8 19h14M1 19h1"/></svg></button>
    <button class="vbtn d-flex align-items-center justify-content-center" aria-label="阅读"><svg class="ic" width="20" height="22" viewBox="0 0 20 22"><path d="M1 1v20l18-10z"/></svg></button>
    <button class="vbtn d-flex align-items-center justify-content-center" aria-label="网页视图"><svg class="ic" width="24" height="24" viewBox="0 0 24 24"><circle cx="12" cy="12" r="11"/><ellipse cx="12" cy="12" rx="5" ry="11"/><path d="M1 12h22"/></svg></button>
    <button class="vbtn d-flex align-items-center justify-content-center" aria-label="写作模式"><svg class="ic" width="24" height="24" viewBox="0 0 24 24"><path d="M8 13L18 2q3-1 4 1 1 2-1 4L12 16zM8 13q-5 1-5 6l-2 3q7 1 9-1 3-2 2-5z"/></svg></button>
    <span class="d-flex align-items-center g22"><span class="vrule"></span>
    <button aria-label="适应"><svg class="ic" width="24" height="22" viewBox="0 0 24 22"><path d="M1 6V1h5M18 1h5v5M23 16v5h-5M6 21H1v-5"/><rect x="7" y="6" width="10" height="10"/></svg></button></span>
    <button class="d-flex align-items-center gap-4 ms-2">125%<svg class="chev"><use href="#cv"/></svg></button>
    <button class="ms-1" aria-label="缩小"><svg width="21" height="4"><rect width="21" height="4" fill="#333"/></svg></button>
    <input class="zoomer" type="range" min="0" max="100" value="52" aria-label="缩放">
    <button aria-label="放大"><svg width="18" height="18" viewBox="0 0 18 18"><path d="M9 0v18M0 9h18" stroke="#333" stroke-width="3"/></svg></button>
    <button class="ms-2" aria-label="全屏"><svg class="ic" width="24" height="22" viewBox="0 0 24 22"><path d="M1 6V1h5M15 1h8v7M23 1l-8 7M23 16v5h-5M1 14v7h7M1 21l8-7"/></svg></button>
  </div>
</div>
<div class="taskbar d-flex">
  <svg width="350" height="16" viewBox="0 0 350 16"><path d="M130 14l5 4h14l-4-4z" fill="#7fa650"/><circle cx="305" cy="27" r="13" fill="#45b6cf"/></svg>
  <span class="task-on"></span>
  <svg width="400" height="16" viewBox="0 0 400 16"><circle cx="44" cy="27" r="13" fill="#c8454f"/><circle cx="131" cy="27" r="12" fill="#3a79a8"/><path d="M202 14h12l6 5h-18z" fill="#c2408e"/><path d="M297 18l6-4 4 2 6-1 3 3z" fill="#55b4ac"/></svg>
  <span class="clock ms-auto">19:39</span><span class="desk-edge"></span>
</div>
</footer>
<div class="wm" aria-hidden="true" id="wm"></div>
<script>
const wm = document.getElementById('wm');
for (let r = 0; r < 13; r++) {
  const row = document.createElement('div');
  row.innerHTML = '<span>code51.cn</span>'.repeat(r % 2 ? 10 : 10);
  wm.append(row);
}
</script>
</body>
</html>
